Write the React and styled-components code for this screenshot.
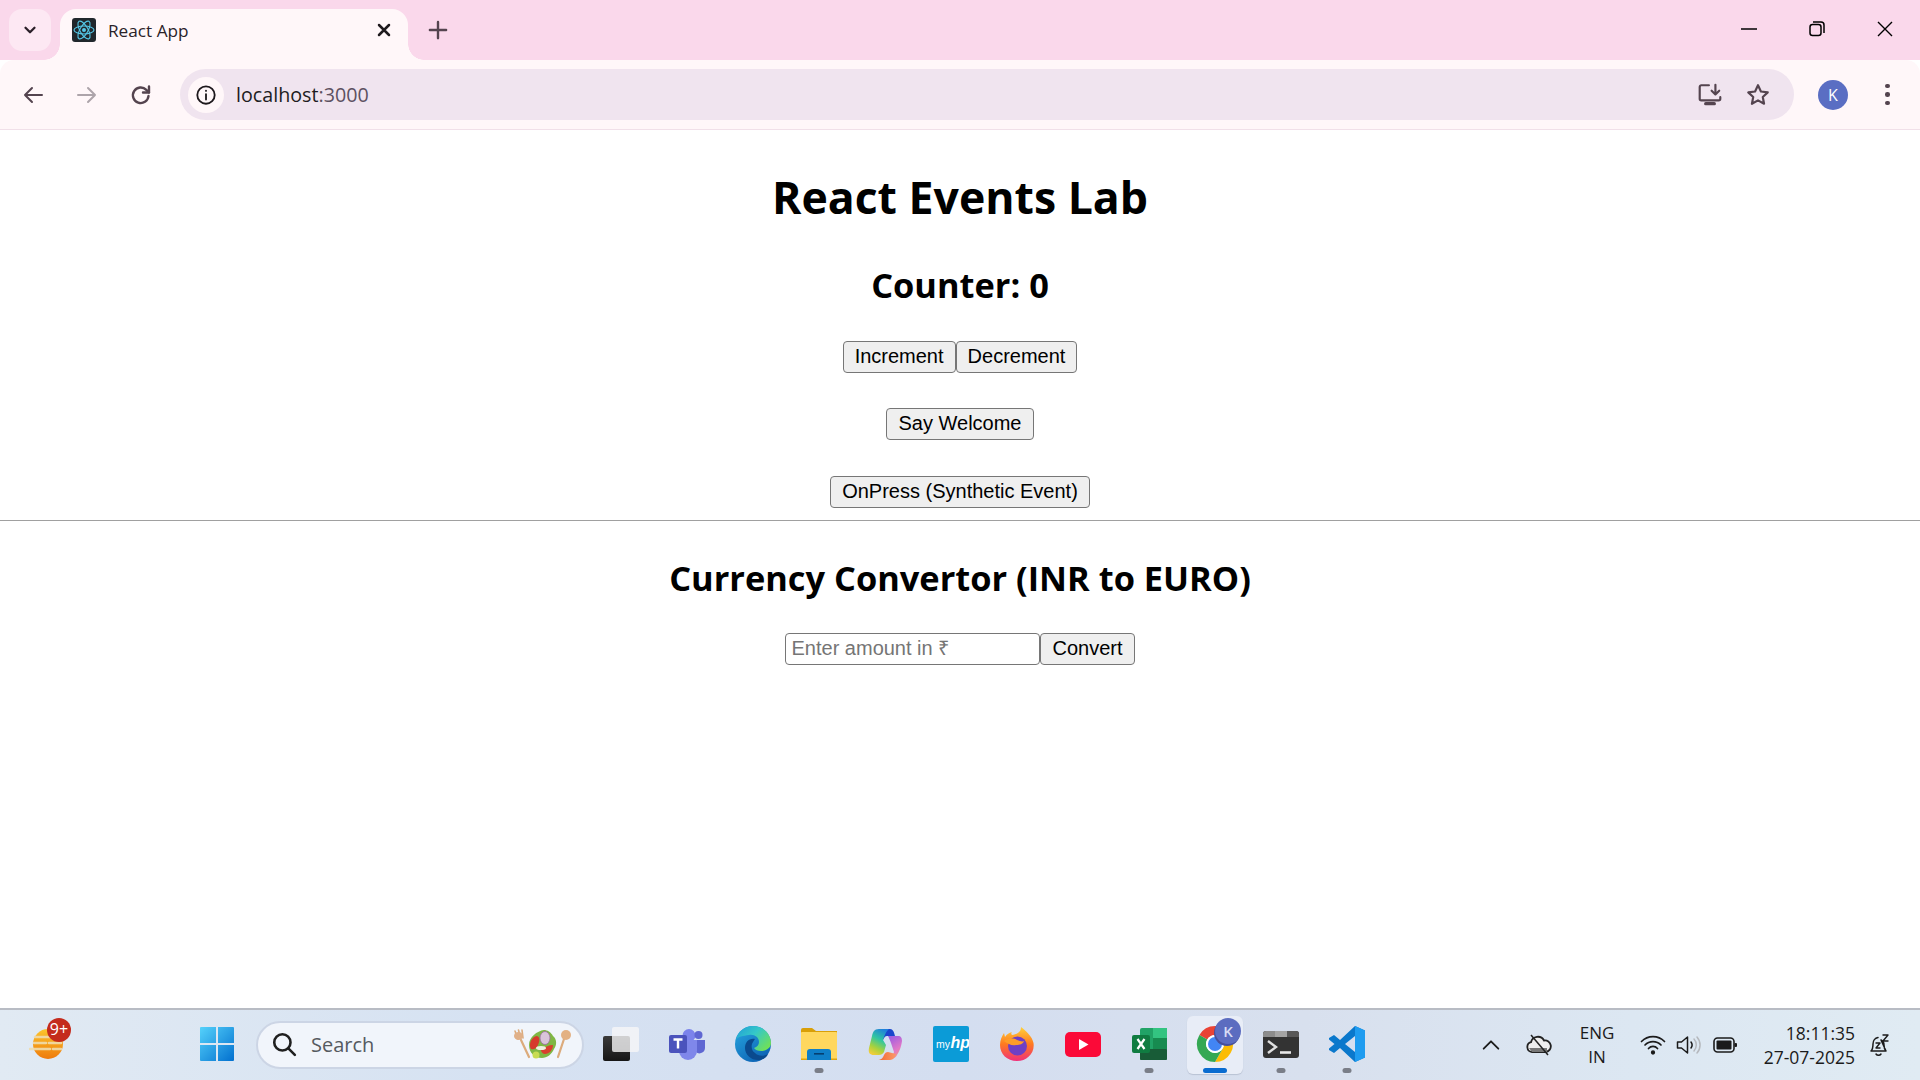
import React from 'react';
import styled, { createGlobalStyle, css } from 'styled-components';

const GlobalStyle = createGlobalStyle`
  html, body { margin: 0; padding: 0; height: 100%; background: #fff; }
  #root { height: 100%; }
`;

const uiFont = `"Open Sans", "Noto Sans", sans-serif`;

const Screen = styled.div`
  width: 1920px;
  height: 1080px;
  display: flex;
  flex-direction: column;
  overflow: hidden;
  font-family: ${uiFont};
`;

/* ---------- browser chrome ---------- */

const TabStrip = styled.div`
  height: 60px;
  flex: none;
  background: #fad8eb;
  display: flex;
  align-items: flex-end;
  padding-left: 9px;
`;

const TabListButton = styled.div`
  width: 42px;
  height: 42px;
  margin-bottom: 9px;
  border-radius: 13px;
  background: #fde8f3;
  display: flex;
  align-items: center;
  justify-content: center;
`;

const Tab = styled.div`
  position: relative;
  width: 348px;
  height: 51px;
  margin-left: 9px;
  box-sizing: border-box;
  padding: 0 14px 9px 12px;
  background: #fff7f9;
  border-radius: 16px 16px 0 0;
  display: flex;
  align-items: center;

  &::before,
  &::after {
    content: '';
    position: absolute;
    bottom: 0;
    width: 16px;
    height: 16px;
    background: radial-gradient(circle at var(--cx) 0, transparent 15.5px, #fff7f9 16px);
  }
  &::before { left: -16px; --cx: 0; }
  &::after { right: -16px; --cx: 100%; }
`;

const TabTitle = styled.span`
  margin-left: 12px;
  flex: 1;
  font-size: 17.2px;
  color: #2a2228;
`;

const NewTab = styled.div`
  width: 30px;
  height: 30px;
  margin: 0 0 15px 15px;
  display: flex;
  align-items: center;
  justify-content: center;
`;

const WindowControls = styled.div`
  margin-left: auto;
  padding-right: 1px;
  display: flex;
  align-self: stretch;
`;

const WindowButton = styled.div`
  width: 68px;
  display: flex;
  align-items: center;
  justify-content: center;
  padding-bottom: 2px;
`;

const Toolbar = styled.div`
  height: 70px;
  flex: none;
  box-sizing: border-box;
  background: #fff7f9;
  border-top-left-radius: 14px;
  border-top-right-radius: 14px;
  border-bottom: 1px solid #f1e0e9;
  display: flex;
  align-items: center;
`;

const NavButton = styled.div`
  width: 54px;
  height: 40px;
  display: flex;
  align-items: center;
  justify-content: center;
`;

const NavGroup = styled.div`
  display: flex;
  padding-left: 6px;
  width: 180px;
  box-sizing: border-box;
`;

const Omnibox = styled.div`
  width: 1614px;
  height: 51px;
  flex: none;
  box-sizing: border-box;
  background: #f0e4ef;
  border-radius: 26px;
  padding: 0 12px 0 8px;
  display: flex;
  align-items: center;
`;

const SiteInfo = styled.div`
  width: 36px;
  height: 36px;
  border-radius: 50%;
  background: #fff7f9;
  display: flex;
  align-items: center;
  justify-content: center;
`;

const Url = styled.div`
  margin-left: 12px;
  flex: 1;
  font-size: 19.7px;
  color: #211c21;
  span { color: #5d5161; }
`;

const OmniAction = styled.div`
  width: 48px;
  display: flex;
  align-items: center;
  justify-content: center;
`;

const Avatar = styled.div`
  width: 30px;
  height: 30px;
  margin-left: 24px;
  border-radius: 50%;
  background: #5a6ec3;
  color: #fff;
  font-size: 16px;
  display: flex;
  align-items: center;
  justify-content: center;
`;

const MenuDots = styled.div`
  margin-left: 37px;
  display: flex;
  flex-direction: column;
  gap: 4px;
  i {
    width: 4.5px;
    height: 4.5px;
    border-radius: 50%;
    background: #54444f;
  }
`;

/* ---------- page ---------- */

const Page = styled.main`
  flex: 1;
  background: #fff;
  color: #000;
  text-align: center;
`;

const Title = styled.h1`
  margin: 35px 0 0;
  font-size: 44.6px;
  line-height: 64px;
  font-weight: 700;
`;

const SubTitle = styled.h2`
  margin: ${(p) => p.$top}px 0 0;
  font-size: 34.4px;
  line-height: 48px;
  font-weight: 700;
`;

const Row = styled.div`
  margin-top: ${(p) => p.$top}px;
  height: 32px;
  display: flex;
  justify-content: center;
`;

const controlBase = css`
  box-sizing: border-box;
  height: 32px;
  margin: 0;
  border: 1.5px solid #767676;
  border-radius: 4px;
  font-family: "Liberation Sans", Arial, sans-serif;
  font-size: 20px;
  color: #000;
`;

const Button = styled.button`
  ${controlBase}
  padding: 0 11px 2px;
  background: #efefef;
`;

const AmountInput = styled.input`
  ${controlBase}
  width: 255px;
  padding: 0 5px 2px;
  background: #fff;
  &::placeholder { color: #757575; opacity: 1; }
`;

const Rule = styled.hr`
  margin: 12px 0 0;
  border: 0;
  border-top: 1.5px solid #a0a0a0;
  height: 0;
`;

/* ---------- taskbar ---------- */

const Taskbar = styled.footer`
  height: 72px;
  flex: none;
  box-sizing: border-box;
  border-top: 2px solid #b8bcc4;
  background: linear-gradient(90deg, #e1eaf3 0%, #d6e2f2 25%, #d4def0 50%, #d8e0ee 68%, #dce7f2 85%, #e0ebf3 100%);
  display: flex;
  align-items: center;
`;

const WidgetSlot = styled.div`
  width: 184px;
  padding-left: 29px;
  box-sizing: border-box;
  flex: none;
`;

const Widget = styled.div`
  position: relative;
  width: 34px;
  height: 30px;
  margin-top: -2px;
`;

const Badge = styled.div`
  position: absolute;
  left: 18px;
  top: -11px;
  width: 24px;
  height: 24px;
  border-radius: 50%;
  background: #c42b1c;
  color: #fff;
  font-size: 16px;
  line-height: 23px;
  text-align: center;
`;

const AppCell = styled.div`
  position: relative;
  width: 66px;
  height: 70px;
  flex: none;
  display: flex;
  align-items: center;
  justify-content: center;
  padding-bottom: 2px;
  box-sizing: border-box;

  ${(p) =>
    p.$active &&
    css`
      &::before {
        content: '';
        position: absolute;
        left: 5px;
        right: 5px;
        top: 6px;
        bottom: 6px;
        border-radius: 6px;
        background: #e8edf7;
        box-shadow: 0 1px 1px #b9c2d3;
      }
      & > svg { position: relative; }
    `}
`;

const Dot = styled.span`
  position: absolute;
  left: 50%;
  bottom: 7px;
  transform: translateX(-50%);
  width: ${(p) => (p.$active ? 24 : 9)}px;
  height: 5px;
  border-radius: 3px;
  background: ${(p) => (p.$active ? '#0a6cd0' : '#7a7e88')};
`;

const SearchBox = styled.div`
  width: 328px;
  height: 48px;
  margin: 0 4px 0 6px;
  flex: none;
  box-sizing: border-box;
  padding: 0 10px 2px 13px;
  background: #f1f5fb;
  border: 2px solid #ccd5e5;
  border-radius: 24px;
  display: flex;
  align-items: center;
  gap: 14px;
`;

const SearchLabel = styled.span`
  flex: 1;
  font-size: 20px;
  color: #555a60;
`;

const Tray = styled.div`
  margin-left: auto;
  padding-right: 17px;
  display: flex;
  align-items: center;
  color: #1b1b1b;
`;

const TrayIcon = styled.div`
  width: ${(p) => p.$w}px;
  display: flex;
  align-items: center;
  justify-content: center;
  flex: none;
`;

const Lang = styled.div`
  width: 66px;
  text-align: center;
  font-size: 17px;
  line-height: 24px;
`;

const Clock = styled.div`
  width: 107px;
  text-align: right;
  font-size: 17.5px;
  line-height: 24px;
`;

/* ---------- icons ---------- */

const Stroke = ({ w = 24, h = 24, box = '0 0 24 24', color = '#54444f', sw = 2, children, fill = 'none' }) => (
  <svg width={w} height={h} viewBox={box} fill={fill} stroke={color} strokeWidth={sw} strokeLinecap="round" strokeLinejoin="round">
    {children}
  </svg>
);

const ReactFavicon = () => (
  <svg width="24" height="24" viewBox="0 0 24 24">
    <rect width="24" height="24" rx="3" fill="#20272c" />
    <g fill="none" stroke="#55c8e8" strokeWidth="1.1">
      <ellipse cx="12" cy="12" rx="10" ry="4" />
      <ellipse cx="12" cy="12" rx="10" ry="4" transform="rotate(60 12 12)" />
      <ellipse cx="12" cy="12" rx="10" ry="4" transform="rotate(120 12 12)" />
    </g>
    <circle cx="12" cy="12" r="2" fill="#55c8e8" />
  </svg>
);

const WeatherIcon = () => (
  <svg width="34" height="30" viewBox="0 0 34 30">
    <defs>
      <linearGradient id="sun" x1="0" y1="0" x2="0" y2="1">
        <stop offset="0" stopColor="#fcc52c" />
        <stop offset="1" stopColor="#ee7a0c" />
      </linearGradient>
    </defs>
    <circle cx="19" cy="15" r="15" fill="url(#sun)" />
    <g stroke="#efdcae" strokeWidth="2.6" strokeLinecap="round">
      <path d="M6 8h24M5 14h12M20 14h12M1 20h20M24 20h8" opacity=".9" />
    </g>
  </svg>
);

const StartIcon = () => (
  <svg width="36" height="36" viewBox="0 0 36 36">
    <defs>
      <linearGradient id="win" x1="0" y1="0" x2="1" y2="1">
        <stop offset="0" stopColor="#55d2fb" />
        <stop offset="1" stopColor="#0270cf" />
      </linearGradient>
    </defs>
    <path d="M1 2a1 1 0 0 1 1-1h15v16H1zM19 1h15a1 1 0 0 1 1 1v15H19zM1 19h16v16H2a1 1 0 0 1-1-1zM19 19h16v15a1 1 0 0 1-1 1H19z" fill="url(#win)" />
  </svg>
);

const SaladIcon = () => (
  <svg width="60" height="30" viewBox="0 0 60 30">
    <g stroke="#dcab7c" strokeWidth="2.200" strokeLinecap="round">
      <path d="M9 11l8 17M52 10l-6 18" />
      <path d="M3 2l3 8M6.500 1l2 8M10 1l1 8" strokeWidth="1.600" />
    </g>
    <ellipse cx="6.500" cy="7" rx="4.500" ry="4" fill="#e0b088" />
    <circle cx="54" cy="6" r="5" fill="#e3b183" />
    <path d="M17 16c0-8 8-14 15-15 3 0 7 2 9 6 4 3 4 9 1 13-2 5-7 9-12 9-7 0-13-5-13-13z" fill="#7fb744" />
    <path d="M18 16c0-5 4-9 7-9 3 1 3 5 1 9-1 3-4 5-7 4-1-1-1-3-1-4z" fill="#d63a2c" />
    <path d="M29 21c3-3 8-5 12-5 0 5-4 9-8 9-2 0-4-2-4-4z" fill="#d93f2e" />
    <ellipse cx="33" cy="9" rx="5" ry="6.500" fill="#d9c4da" stroke="#9a6b9e" strokeWidth=".8" />
    <ellipse cx="29" cy="19" rx="5" ry="2" fill="#eef0e0" />
    <circle cx="24" cy="26" r="3.500" fill="#c8dc52" />
  </svg>
);

const TaskViewIcon = () => (
  <svg width="36" height="34" viewBox="0 0 36 34">
    <defs>
      <linearGradient id="tv" x1="0" y1="0" x2="0" y2="1">
        <stop offset="0" stopColor="#3a3a3a" />
        <stop offset="1" stopColor="#161616" />
      </linearGradient>
    </defs>
    <rect x="0" y="9" width="27" height="25" rx="2" fill="url(#tv)" />
    <rect x="9" y="0" width="27" height="25" rx="2" fill="#f6f6f8" fillOpacity=".8" />
  </svg>
);

const TeamsIcon = () => (
  <svg width="36" height="31" viewBox="0 0 36 31">
    <circle cx="20" cy="6.500" r="6.500" fill="#7b83eb" />
    <circle cx="29.500" cy="6" r="4" fill="#5f67d2" />
    <path d="M25 11h11v8a5.500 5.500 0 0 1-10 3z" fill="#5f67d2" />
    <path d="M10 11h18v11a9 9 0 0 1-18 0z" fill="#7f87ea" />
    <rect y="6" width="18" height="18" rx="2" fill="#4b53bc" />
    <path d="M4.500 10.500h9M9 10.500v9" stroke="#fff" strokeWidth="2.400" />
  </svg>
);

const EdgeIcon = () => (
  <svg width="36" height="36" viewBox="0 0 36 36">
    <defs>
      <linearGradient id="edgeA" x1="0" y1="0" x2="0.700" y2="1">
        <stop offset="0" stopColor="#28a8e0" />
        <stop offset="1" stopColor="#0c62b4" />
      </linearGradient>
      <linearGradient id="edgeB" x1="0" y1="0" x2="1" y2="0.700">
        <stop offset="0" stopColor="#1f9cd8" />
        <stop offset=".5" stopColor="#35c8c8" />
        <stop offset="1" stopColor="#6fe05a" />
      </linearGradient>
    </defs>
    <circle cx="18" cy="18" r="18" fill="url(#edgeA)" />
    <path d="M1 14C3 5 10 0 18 0c10 0 18 8 18 17 0 5-5 8-10 8-3 0-6-1-7-3 3-1 5-3 5-6 0-5-5-8-10-7-6 1-11 1-13 5z" fill="url(#edgeB)" />
    <path d="M20 13c-6-1-10 3-10 9 0 7 7 13 15 12 4-1 7-3 8-6-5 3-10 2-13-1-3-2-4-6-3-9 1-2 2-4 3-5z" fill="#0a4a8e" />
  </svg>
);

const FilesIcon = () => (
  <svg width="36" height="32" viewBox="0 0 36 32">
    <path d="M0 2a2 2 0 0 1 2-2h9l4 3h21v6H0z" fill="#d99f08" />
    <rect y="4" width="36" height="28" rx="1" fill="#ffd75e" />
    <path d="M6 32V24a3 3 0 0 1 3-3h18a3 3 0 0 1 3 3v8z" fill="#0f7fc8" />
    <rect x="13" y="25" width="10" height="1.600" fill="#063f70" />
    <rect y="30.500" width="6" height="1.500" fill="#e0a50c" />
    <rect x="30" y="30.500" width="6" height="1.500" fill="#e0a50c" />
  </svg>
);

const CopilotIcon = () => (
  <svg width="34" height="32" viewBox="0 0 34 32">
    <defs>
      <linearGradient id="copA" x1="0.700" y1="0" x2="0.300" y2="1">
        <stop offset="0" stopColor="#1f7fdc" />
        <stop offset=".4" stopColor="#2fc6a0" />
        <stop offset=".75" stopColor="#a8d23c" />
        <stop offset="1" stopColor="#f0cd3a" />
      </linearGradient>
      <linearGradient id="copB" x1="0.300" y1="0" x2="0.700" y2="1">
        <stop offset="0" stopColor="#a05ee0" />
        <stop offset=".6" stopColor="#e078c8" />
        <stop offset="1" stopColor="#f59a7a" />
      </linearGradient>
      <linearGradient id="copC" x1="0" y1="0" x2="1" y2="0">
        <stop offset="0" stopColor="#f0642c" />
        <stop offset="1" stopColor="#fb9a6a" />
      </linearGradient>
    </defs>
    <path d="M12 1h10c3 0 4 3 5 7H19c-2 0-3 2-4 4z" fill="#1a45cc" />
    <path d="M20 8h10c3 0 4 2 4 5-1 7-3 11-5 14-1 2-3 4-7 4 2-2 3-4 4-7l-3-9c-1-3-2-5-3-7z" fill="url(#copB)" />
    <path d="M9 32h13c3 0 5-3 6-6l-8-2c-2 0-3 1-4 3-1 3-3 5-7 5z" fill="url(#copC)" />
    <path d="M11 1C6 1 5 4 4 8L1 20c-1 5 1 7 5 7h5c2 0 4-1 5-3l2-7-3-5c1-3 3-9 6-11z" fill="url(#copA)" />
  </svg>
);

const HpIcon = () => (
  <svg width="36" height="36" viewBox="0 0 36 36">
    <rect width="36" height="36" rx="2" fill="#0b9bd7" />
    <text x="3" y="22" fontFamily='"Liberation Sans", sans-serif' fontSize="10.500" fill="#fff">my</text>
    <text x="17.500" y="22" fontFamily='"Liberation Sans", sans-serif' fontSize="16" fontStyle="italic" fontWeight="700" fill="#fff">hp</text>
  </svg>
);

const FirefoxIcon = () => (
  <svg width="34" height="34" viewBox="0 0 34 34">
    <defs>
      <linearGradient id="ffA" x1="0.500" y1="0" x2="0.500" y2="1">
        <stop offset="0" stopColor="#ffd23a" />
        <stop offset=".5" stopColor="#ff7a20" />
        <stop offset="1" stopColor="#f0307a" />
      </linearGradient>
    </defs>
    <path d="M21 0c5 4 11 9 12.500 16C35 26 27 34 17 34S0 27 0 18C0 13 2 9 4 6l1 4c2-3 4-4 7-5-1 1-1 2 0 3 4-1 9-2 9-8z" fill="url(#ffA)" />
    <circle cx="17.500" cy="19" r="9.500" fill="#6e3fc4" />
    <path d="M4 14c4-3 10-3 13-1 3 1 5 2 7 1-1 3-4 4-8 4-4 1-8-1-12-4z" fill="#ff9d27" />
  </svg>
);

const YoutubeIcon = () => (
  <svg width="36" height="25" viewBox="0 0 36 25">
    <rect width="36" height="25" rx="5" fill="#fb0a38" />
    <path d="M14 7l9.500 5.500L14 18z" fill="#fff" />
  </svg>
);

const ExcelIcon = () => (
  <svg width="35" height="32" viewBox="0 0 35 32">
    <rect x="8" y="0" width="27" height="32" rx="2" fill="#21a366" />
    <rect x="21" y="0" width="14" height="10" fill="#33c481" />
    <rect x="8" y="21" width="27" height="11" rx="1" fill="#185c37" />
    <rect x="21" y="10" width="14" height="11" fill="#107c41" opacity=".6" />
    <rect x="0" y="7" width="18" height="18" rx="2" fill="#107c41" />
    <path d="M5.500 11l7 10M12.500 11l-7 10" stroke="#fff" strokeWidth="2.200" />
  </svg>
);

const ChromeIcon = () => (
  <svg width="36" height="36" viewBox="0 0 36 36" overflow="visible">
    <path d="M2.400 9A18 18 0 0 1 33.600 9H18a9 9 0 0 0-7.800 4.500z" fill="#ea4335" />
    <path d="M33.600 9A18 18 0 0 1 18 36l7.800-13.500A9 9 0 0 0 18 9z" fill="#fbbc04" />
    <path d="M2.400 9A18 18 0 0 0 18 36l7.800-13.500a9 9 0 0 1-15.600-9z" fill="#34a853" />
    <circle cx="18" cy="18" r="9" fill="#fff" />
    <circle cx="18" cy="18" r="7" fill="#4285f4" />
    <circle cx="30" cy="7" r="13" fill="#454f9c" />
    <circle cx="31" cy="5" r="13" fill="#5b6cc0" />
    <text x="31" y="10.500" textAnchor="middle" fontFamily='"Open Sans", sans-serif' fontSize="15" fontWeight="600" fill="#d7dcf4">K</text>
  </svg>
);

const TerminalIcon = () => (
  <svg width="36" height="27" viewBox="0 0 36 27">
    <rect width="36" height="27" rx="3" fill="#333" />
    <path d="M0 3a3 3 0 0 1 3-3h9v6H0z" fill="#8c8c8c" />
    <path d="M12 0h12v6H12z" fill="#a4a4a4" />
    <path d="M24 0h9a3 3 0 0 1 3 3v3H24z" fill="#585858" />
    <path d="M5 10l8 6-8 6" fill="none" stroke="#e0e0e0" strokeWidth="2.400" />
    <path d="M17 21.500h11" stroke="#e8e8e8" strokeWidth="2.600" />
  </svg>
);

const VsCodeIcon = () => (
  <svg width="36" height="36" viewBox="0 0 36 36">
    <path d="M26 0l10 4.500v27L26 36 11 22l-6 5-5-3v-12l5-3 6 5z" fill="#0a78cc" />
    <path d="M0 13.500L5.500 18 0 22.500z" fill="#d6dff0" />
    <path d="M26 10l-10 8 10 8z" fill="#d6dff0" />
    <path d="M26 0l10 4.500v27L26 36z" fill="#1f9cf0" />
  </svg>
);

const apps = [
  { name: 'teams', Icon: TeamsIcon },
  { name: 'edge', Icon: EdgeIcon },
  { name: 'files', Icon: FilesIcon, dot: true },
  { name: 'copilot', Icon: CopilotIcon },
  { name: 'myhp', Icon: HpIcon },
  { name: 'firefox', Icon: FirefoxIcon },
  { name: 'youtube', Icon: YoutubeIcon },
  { name: 'excel', Icon: ExcelIcon, dot: true },
  { name: 'chrome', Icon: ChromeIcon, active: true },
  { name: 'terminal', Icon: TerminalIcon, dot: true },
  { name: 'vscode', Icon: VsCodeIcon, dot: true },
];

export default function App() {
  return (
    <Screen>
      <GlobalStyle />
      <TabStrip>
        <TabListButton>
          <Stroke w={18} h={18} color="#2a1f28" sw={3}><path d="M6 9l6 6 6-6" /></Stroke>
        </TabListButton>
        <Tab>
          <ReactFavicon />
          <TabTitle>React App</TabTitle>
          <Stroke w={20} h={20} color="#1f1a1e" sw={3}><path d="M6 6l12 12M18 6L6 18" /></Stroke>
        </Tab>
        <NewTab>
          <Stroke w={26} h={26} color="#54444f" sw={2.2}><path d="M12 4.500v15M4.500 12h15" /></Stroke>
        </NewTab>
        <WindowControls>
          <WindowButton>
            <svg width="16" height="16" viewBox="0 0 16 16"><path d="M0 8h16" stroke="#000" strokeWidth="1.500" /></svg>
          </WindowButton>
          <WindowButton>
            <svg width="16" height="16" viewBox="0 0 16 16" fill="none" stroke="#000" strokeWidth="1.500">
              <rect x="1" y="3.500" width="11" height="11" rx="2.500" />
              <path d="M4 1h8a3 3 0 0 1 3 3v8" />
            </svg>
          </WindowButton>
          <WindowButton>
            <svg width="16" height="16" viewBox="0 0 16 16"><path d="M1 1l14 14M15 1L1 15" stroke="#000" strokeWidth="1.400" /></svg>
          </WindowButton>
        </WindowControls>
      </TabStrip>

      <Toolbar>
        <NavGroup>
          <NavButton>
            <Stroke w={24} h={24}><path d="M21 12H4M11 5l-7 7 7 7" /></Stroke>
          </NavButton>
          <NavButton>
            <Stroke w={24} h={24} color="#ada4aa"><path d="M3 12h17M13 5l7 7-7 7" /></Stroke>
          </NavButton>
          <NavButton>
            <Stroke w={24} h={24} sw={2.4}>
              <path d="M19.500 13a7.800 7.800 0 1 1-2.200-6.200L20 9.500" />
              <path d="M20 3.500v6h-6" />
            </Stroke>
          </NavButton>
        </NavGroup>
        <Omnibox>
          <SiteInfo>
            <Stroke w={22} h={22} color="#1d181c" sw={2}>
              <circle cx="12" cy="12" r="9.500" />
              <path d="M12 11v6M12 7.200v.3" />
            </Stroke>
          </SiteInfo>
          <Url>localhost<span>:3000</span></Url>
          <OmniAction>
            <Stroke w={26} h={26} sw={2}>
              <path d="M11 3H4a1.500 1.500 0 0 0-1.500 1.500v11A1.500 1.500 0 0 0 4 17h16a1.500 1.500 0 0 0 1.500-1.500V14" />
              <path d="M17 2.500V11M13.500 8l3.500 3.500L20.500 8" />
              <path d="M8 20h8" strokeWidth="3" />
            </Stroke>
          </OmniAction>
          <OmniAction>
            <Stroke w={26} h={26} sw={2}>
              <path d="M12 3l2.700 5.800 6.300.8-4.600 4.300 1.200 6.200L12 17l-5.600 3.100 1.200-6.200L3 9.600l6.300-.8z" />
            </Stroke>
          </OmniAction>
        </Omnibox>
        <Avatar>K</Avatar>
        <MenuDots><i /><i /><i /></MenuDots>
      </Toolbar>

      <Page>
        <Title>React Events Lab</Title>
        <SubTitle $top={32}>Counter: 0</SubTitle>
        <Row $top={32}>
          <Button>Increment</Button>
          <Button>Decrement</Button>
        </Row>
        <Row $top={35}>
          <Button>Say Welcome</Button>
        </Row>
        <Row $top={36}>
          <Button>OnPress (Synthetic Event)</Button>
        </Row>
        <Rule />
        <SubTitle $top={33}>Currency Convertor (INR to EURO)</SubTitle>
        <Row $top={31}>
          <AmountInput placeholder="Enter amount in ₹" />
          <Button>Convert</Button>
        </Row>
      </Page>

      <Taskbar>
        <WidgetSlot>
          <Widget>
            <WeatherIcon />
            <Badge>9+</Badge>
          </Widget>
        </WidgetSlot>
        <AppCell><StartIcon /></AppCell>
        <SearchBox>
          <Stroke w={26} h={26} color="#1f1f1f" sw={2.4}>
            <circle cx="10.500" cy="10.500" r="7.500" />
            <path d="M16 16l6 6" />
          </Stroke>
          <SearchLabel>Search</SearchLabel>
          <SaladIcon />
        </SearchBox>
        <AppCell><TaskViewIcon /></AppCell>
        {apps.map(({ name, Icon, dot, active }) => (
          <AppCell key={name} $active={active}>
            <Icon />
            {(dot || active) && <Dot $active={active} />}
          </AppCell>
        ))}
        <Tray>
          <TrayIcon $w={46}>
            <Stroke w={22} h={22} color="#1b1b1b" sw={2}><path d="M4 16l8-8 8 8" /></Stroke>
          </TrayIcon>
          <TrayIcon $w={50}>
            <svg width="26" height="22" viewBox="0 0 26 22">
              <path d="M6 18a5 5 0 0 1-1-9.800A7 7 0 0 1 18 6.500a5.500 5.500 0 0 1 2 11.500z" fill="#eee" stroke="#222" strokeWidth="1.800" />
              <path d="M3 14h18v4H6z" fill="#777" />
              <path d="M5 1l17 20" stroke="#222" strokeWidth="1.500" />
            </svg>
          </TrayIcon>
          <Lang>ENG<br />IN</Lang>
          <TrayIcon $w={46}>
            <Stroke w={26} h={22} box="0 0 26 22" color="#1b1b1b" sw={1.7}>
              <path d="M1.500 7.500a16 16 0 0 1 23 0M5 11a11 11 0 0 1 16 0M8.500 14.500a6 6 0 0 1 9 0" />
              <circle cx="13" cy="18.500" r="1.300" fill="#1b1b1b" />
            </Stroke>
          </TrayIcon>
          <TrayIcon $w={26}>
            <Stroke w={26} h={22} box="0 0 26 22" color="#1b1b1b" sw={1.5}>
              <path d="M1.500 8v6h4l6 5V3l-6 5z" />
              <path d="M15 8a5 5 0 0 1 0 6" />
              <path d="M18 5a9 9 0 0 1 0 12M21 3a12 12 0 0 1 0 16" stroke="#b5b8bd" />
            </Stroke>
          </TrayIcon>
          <TrayIcon $w={46}>
            <svg width="24" height="16" viewBox="0 0 24 16">
              <rect x="1" y="1" width="20" height="14" rx="3.500" fill="none" stroke="#1b1b1b" strokeWidth="1.600" />
              <rect x="3.500" y="3.500" width="15" height="9" rx="1" fill="#1b1b1b" />
              <rect x="21.500" y="6" width="2.500" height="4" rx="1" fill="#1b1b1b" />
            </svg>
          </TrayIcon>
          <Clock>18:11:35<br />27-07-2025</Clock>
          <TrayIcon $w={48}>
            <Stroke w={24} h={24} color="#1b1b1b" sw={1.5}>
              <path d="M4 18c2-2 2-4 2-7s2-6 5-6.500M14 7c2 1 3 3 3 5 0 3 0 4 2 6zM4 18h15M9 21a3 3 0 0 0 5 0" />
              <path d="M9 10h4l-4 5h4M16 2h5l-5 6h5" strokeWidth="1.400" />
            </Stroke>
          </TrayIcon>
        </Tray>
      </Taskbar>
    </Screen>
  );
}
